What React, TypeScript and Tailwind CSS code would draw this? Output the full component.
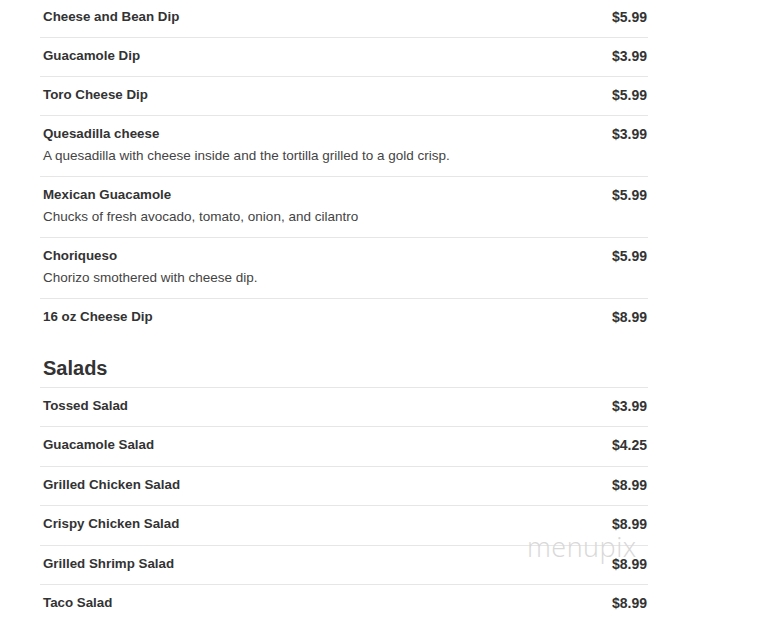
const dips = [
  { name: "Cheese and Bean Dip", price: "$5.99" },
  { name: "Guacamole Dip", price: "$3.99" },
  { name: "Toro Cheese Dip", price: "$5.99" },
  {
    name: "Quesadilla cheese",
    price: "$3.99",
    desc: "A quesadilla with cheese inside and the tortilla grilled to a gold crisp.",
  },
  {
    name: "Mexican Guacamole",
    price: "$5.99",
    desc: "Chucks of fresh avocado, tomato, onion, and cilantro",
  },
  { name: "Choriqueso", price: "$5.99", desc: "Chorizo smothered with cheese dip." },
  { name: "16 oz Cheese Dip", price: "$8.99" },
];

const salads = [
  { name: "Tossed Salad", price: "$3.99" },
  { name: "Guacamole Salad", price: "$4.25" },
  { name: "Grilled Chicken Salad", price: "$8.99" },
  { name: "Crispy Chicken Salad", price: "$8.99" },
  { name: "Grilled Shrimp Salad", price: "$8.99" },
  { name: "Taco Salad", price: "$8.99" },
];

type Item = { name: string; price: string; desc?: string };

function MenuRow({ item, last, tall }: { item: Item; last: boolean; tall?: boolean }) {
  return (
    <div
      className={`flex items-start justify-between pl-[3px] pr-[1px] pt-[8px] ${
        tall ? "pb-[10.4px]" : "pb-[10px]"
      } ${last ? "" : "border-b border-[#e6e6e6]"}`}
    >
      <div>
        <div className="text-[13.33px] font-bold leading-[20px] text-[#333]">{item.name}</div>
        {item.desc ? (
          <div className="mt-[2px] text-[13.5px] leading-[20px] text-[#444]">{item.desc}</div>
        ) : null}
      </div>
      <div className="text-[14px] font-bold leading-[20px] text-[#333]">{item.price}</div>
    </div>
  );
}

export default function App() {
  return (
    <div
      className="relative h-[633px] w-[760px] overflow-hidden bg-white"
      style={{ fontFamily: '"Liberation Sans", Arial, sans-serif' }}
    >
      <div className="ml-[40px] -mt-[1px] w-[608px]">
        <section>
          {dips.map((item, i) => (
            <MenuRow key={item.name} item={item} last={i === dips.length - 1} />
          ))}
        </section>

        <section className="mt-[19px]">
          <h2 className="border-b border-[#e6e6e6] pb-[7px] pl-[3px] text-[20px] font-bold leading-[24px] text-[#333]">
            Salads
          </h2>
          {salads.map((item, i) => (
            <MenuRow key={item.name} item={item} tall last={i === salads.length - 1} />
          ))}
        </section>
      </div>

      <div
        className="pointer-events-none absolute left-[527px] top-[532px] text-[27px] font-light leading-[30px] tracking-[0.5px] text-[#d8d8d8]"
        style={{ fontFamily: '"Open Sans", Lato, sans-serif' }}
      >
        menupix
      </div>
    </div>
  );
}
